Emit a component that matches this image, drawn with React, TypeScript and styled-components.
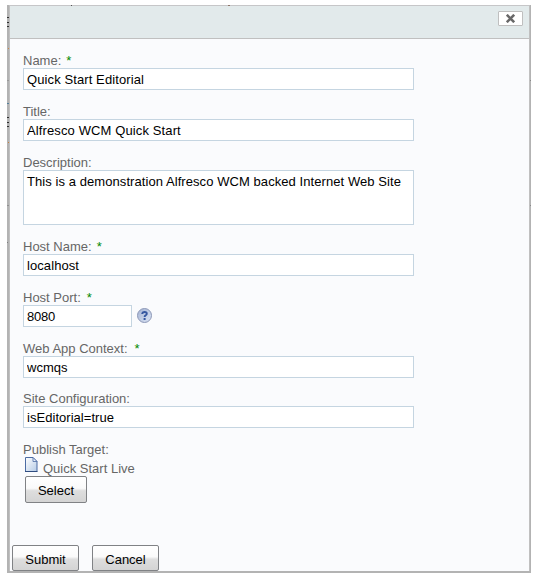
import React from "react";
import styled, { createGlobalStyle } from "styled-components";

const GlobalStyle = createGlobalStyle`
  * { box-sizing: border-box; }
  body {
    margin: 0;
    background: #fff;
    font: 13px/16px "Liberation Sans", Arial, sans-serif;
    color: #666;
  }
`;

const Page = styled.div`
  height: 580px;
  padding: 5px 0 0 7px;
  overflow: hidden;
`;

const Shadow = styled.div`
  position: relative;
  width: 524px;
  height: 568px;
  padding: 0 1px 2px 2px;
  background: #b3b3b3;
`;

const Trace = styled.i<{ $x: number; $y: number; $color: string; $width?: number }>`
  position: absolute;
  left: ${(p) => p.$x}px;
  top: ${(p) => p.$y}px;
  width: ${(p) => p.$width ?? 2}px;
  height: 1px;
  background: ${(p) => p.$color};
`;

const Dialog = styled.div`
  display: flex;
  flex-direction: column;
  height: 566px;
  border: solid #c0c0c0;
  border-width: 1px 1px 0 1px;
  border-top-color: #c6c6c8;
  background: #fafbfd;
`;

const Header = styled.header`
  display: flex;
  justify-content: flex-end;
  flex: none;
  height: 33px;
  padding: 5px 6px 0 0;
  background: #e2eaeb;
  border-bottom: 1px solid #c0c0c0;
`;

const CloseButton = styled.button`
  display: flex;
  align-items: center;
  justify-content: center;
  width: 25px;
  height: 15px;
  padding: 0;
  border: 1px solid #bfbfbf;
  border-radius: 1px;
  background: #fff;
`;

const Form = styled.form`
  display: flex;
  flex-direction: column;
  flex: 1;
  padding: 13px 13px 0;
`;

const Field = styled.div<{ $gap?: number }>`
  margin-bottom: ${(p) => p.$gap ?? 13}px;
`;

const Label = styled.label<{ $gap?: number }>`
  display: flex;
  height: 16px;
  padding-top: 1px;
  gap: ${(p) => p.$gap ?? 5}px;
  white-space: nowrap;
`;

const Required = styled.span`
  color: #080;
`;

const Row = styled.div`
  display: flex;
  align-items: center;
  gap: 5px;
`;

const TextInput = styled.input<{ $width?: number; $spacing?: number }>`
  display: block;
  width: ${(p) => p.$width ?? 391}px;
  height: 22px;
  padding: 1px 3px 0;
  border: 1px solid #c5d5e1;
  border-radius: 0;
  background: #fff;
  color: #000;
  font: inherit;
  letter-spacing: ${(p) => p.$spacing ?? 0}px;
`;

const TextArea = styled.textarea`
  display: block;
  width: 391px;
  height: 55px;
  padding: 3px;
  border: 1px solid #c5d5e1;
  background: #fff;
  color: #000;
  font: inherit;
  letter-spacing: 0.07px;
  resize: none;
  overflow: hidden;
`;

const Target = styled.div`
  display: flex;
  gap: 4px;
  height: 19px;
  padding-left: 2px;
  span { padding-top: 4px; }
  svg { flex: none; }
`;

const Button = styled.button<{ $width: number; $height?: number }>`
  width: ${(p) => p.$width}px;
  height: ${(p) => p.$height ?? 26}px;
  padding: 3px 0 0;
  border: 1px solid #808285;
  border-radius: 2px;
  background: linear-gradient(#fff 0%, #fafafa 45%, #dedede 55%, #d4d4d4 100%);
  color: #000;
  font: inherit;
`;

const SelectSlot = styled.div`
  padding-left: 2px;
`;

const Actions = styled.footer`
  display: flex;
  gap: 13px;
  padding-left: 2px;
`;

const HelpIcon = () => (
  <svg width="16" height="16" viewBox="0 0 16 16" aria-label="Help">
    <defs>
      <linearGradient id="help" x1="0" y1="0" x2="1" y2="1">
        <stop offset="0" stopColor="#a3b2d3" />
        <stop offset="1" stopColor="#dce5f5" />
      </linearGradient>
    </defs>
    <circle cx="7.5" cy="7.5" r="7" fill="url(#help)" stroke="#8d98b7" />
    <path d="M5.3 6V5.3Q5.7 4 7.6 4Q9.8 4 9.8 5.7Q9.8 6.6 8.7 7.3Q7.6 8 7.6 9" fill="none" stroke="#3657a0" strokeWidth="1.9" />
    <path d="M6.6 10h2v2h-2z" fill="#3657a0" />
  </svg>
);

const FileIcon = () => (
  <svg width="14" height="16" viewBox="0 0 14 16">
    <defs>
      <linearGradient id="file" x1="0" y1="0" x2="1" y2="1">
        <stop offset="0" stopColor="#fff" />
        <stop offset="1" stopColor="#b5cbe6" />
      </linearGradient>
    </defs>
    <path d="M.5.5h7.5l4 4v10H.5z" fill="url(#file)" stroke="#4b6ba3" />
    <path d="M8 .5v4h4z" fill="#e8f1fc" stroke="#4b6ba3" strokeWidth=".8" />
    <path d="M0 14.5h12.5" stroke="#304d80" />
  </svg>
);

const CloseIcon = () => (
  <svg width="9" height="9" viewBox="0 0 9 9">
    <path d="M.8 .8l7.4 7.4M8.2 .8L.8 8.2" stroke="#686868" strokeWidth="2.6" />
  </svg>
);

interface FieldLabelProps {
  text: string;
  required?: boolean;
  gap?: number;
}

const FieldLabel = ({ text, required, gap }: FieldLabelProps) => (
  <Label $gap={gap}>
    <span>{text}</span>
    {required && <Required>*</Required>}
  </Label>
);

const traces = [
  { x: 0, y: 12, color: "#303030" },
  { x: 0, y: 17, color: "#303030" },
  { x: 0, y: 21, color: "#303030" },
  { x: 1, y: 43, color: "#d08a4a", width: 1 },
  { x: 0, y: 75, color: "#999" },
  { x: 0, y: 98, color: "#54809a" },
  { x: 0, y: 112, color: "#303030" },
  { x: 0, y: 117, color: "#303030" },
  { x: 0, y: 121, color: "#303030" },
  { x: 1, y: 137, color: "#c8803e", width: 1 },
  { x: 0, y: 200, color: "#909090" },
  { x: 0, y: 237, color: "#808080", width: 1 },
  { x: 64, y: 0, color: "#555", width: 1 },
  { x: 221, y: 0, color: "#8d7468" },
  { x: 523, y: 75, color: "#888", width: 1 },
  { x: 523, y: 200, color: "#888", width: 1 },
];

export default function App() {
  return (
    <>
      <GlobalStyle />
      <Page>
        <Shadow>
          <Dialog>
            <Header>
              <CloseButton aria-label="Close"><CloseIcon /></CloseButton>
            </Header>
            <Form>
              <Field>
                <FieldLabel text="Name:" required />
                <TextInput defaultValue="Quick Start Editorial" $spacing={0.1} />
              </Field>
              <Field>
                <FieldLabel text="Title:" />
                <TextInput defaultValue="Alfresco WCM Quick Start" $spacing={0.12} />
              </Field>
              <Field>
                <FieldLabel text="Description:" />
                <TextArea defaultValue="This is a demonstration Alfresco WCM backed Internet Web Site" spellCheck={false} />
              </Field>
              <Field>
                <FieldLabel text="Host Name:" required />
                <TextInput defaultValue="localhost" $spacing={0.08} />
              </Field>
              <Field>
                <FieldLabel text="Host Port:" required gap={6} />
                <Row>
                  <TextInput $width={109} defaultValue="8080" $spacing={-0.2} />
                  <HelpIcon />
                </Row>
              </Field>
              <Field $gap={12}>
                <FieldLabel text="Web App Context:" required gap={7} />
                <TextInput defaultValue="wcmqs" />
              </Field>
              <Field>
                <FieldLabel text="Site Configuration:" />
                <TextInput defaultValue="isEditorial=true" $spacing={0.04} />
              </Field>
              <Field>
                <FieldLabel text="Publish Target:" />
                <Target><FileIcon /><span>Quick Start Live</span></Target>
                <SelectSlot><Button type="button" $width={62} $height={27}>Select</Button></SelectSlot>
              </Field>
            </Form>
            <Actions>
              <Button $width={67}>Submit</Button>
              <Button $width={67}>Cancel</Button>
            </Actions>
          </Dialog>
          {traces.map((t) => (
            <Trace key={`${t.x}-${t.y}`} $x={t.x} $y={t.y} $color={t.color} $width={t.width} />
          ))}
        </Shadow>
      </Page>
    </>
  );
}
